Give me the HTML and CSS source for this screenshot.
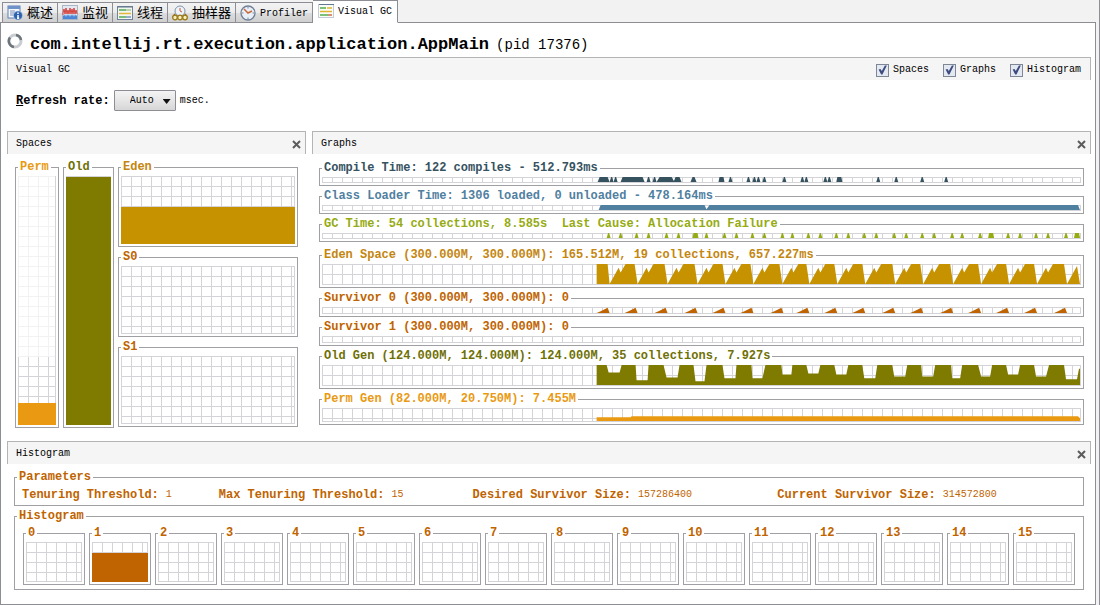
FILE: index.html
```html
<!DOCTYPE html>
<html lang="zh-CN">
<head>
<meta charset="utf-8">
<title>Visual GC</title>
<link rel="stylesheet" href="styles.css">
</head>
<body>
<div class="window">
  <nav class="tabs" role="tablist">
    <button class="tab" role="tab"><svg class="icon" viewBox="0 0 16 16"><rect x="1" y="1" width="12" height="12" fill="#f4f7fc" stroke="#5b7fb5"/><path d="M1 1h12v3H1z" fill="#6f93c8"/><path d="M3 6h5M3 8h4M3 10h4" stroke="#7d93b5"/><circle cx="11" cy="10.500" r="4.500" fill="#2d62ae" stroke="#c9d8ee" stroke-width=".6"/><path d="M11 7.500v1.500M11 10v3.500M10 13.200h2.200" stroke="#fff" stroke-width="1.500"/></svg>概述</button>
    <button class="tab" role="tab"><svg class="icon" viewBox="0 0 16 16"><rect x=".5" y=".5" width="15" height="14" fill="#e4e9f1" stroke="#a9b4c4"/><path d="M1 10V8l1-4 1 5 1-6 1 6 1-4 1 4 1-6 1 6 1-5 1 5 1-6 1 6 1-4 1 4" fill="none" stroke="#d6403c"/><path d="M1 14V10l1 1 1-2 1 3 1-3 1 2 1-2 1 3 1-3 1 2 1-2 1 3 1-3 1 2 1-1v4z" fill="#4a86d8"/></svg>监视</button>
    <button class="tab" role="tab"><svg class="icon" viewBox="0 0 16 16"><rect x=".5" y="1.500" width="15" height="13" fill="#f3f6f0" stroke="#71839b"/><path d="M.5 2h15" stroke="#5f7288"/><path d="M2 5h7" stroke="#51a854" stroke-width="1.500"/><path d="M9 5h5" stroke="#a9c89a" stroke-width="1.500"/><path d="M2 8.500h12" stroke="#e3b63c" stroke-width="1.500"/><path d="M2 12h7" stroke="#51a854" stroke-width="1.500"/><path d="M9 12h5" stroke="#7895c5" stroke-width="1.500"/></svg>线程</button>
    <button class="tab" role="tab"><svg class="icon" viewBox="0 0 16 16"><circle cx="8" cy="6" r="5" fill="#eef3fa" stroke="#7f91a8"/><path d="M8 3v3l2 1" fill="none" stroke="#c65b34"/><path d="M1 12l2-3M15 12l-2-3" stroke="#8b6b13" stroke-width="1.500"/><g fill="#f7eebd" stroke="#9b7918" stroke-width="1.300"><circle cx="3" cy="12.500" r="2.300"/><circle cx="8" cy="12.500" r="2.300"/><circle cx="13" cy="12.500" r="2.300"/></g></svg>抽样器</button>
    <button class="tab" role="tab"><svg class="icon" viewBox="0 0 16 16"><circle cx="8" cy="8" r="7" fill="#e8eff8" stroke="#6f7f95" stroke-width="1.300"/><path d="M8 2v1.500M8 12.500V14M2 8h1.500M12.500 8H14" stroke="#7b8797"/><path d="M4 4l4 4 4-2" fill="none" stroke="#c96a3a" stroke-width="1.500"/></svg>Profiler</button>
    <button class="tab tab-active" role="tab" aria-selected="true"><svg class="icon" viewBox="0 0 16 16"><rect x=".5" y="1.500" width="15" height="13" fill="#fbfcf5" stroke="#c3ccd4"/><path d="M1 1.500h15" stroke="#60788f"/><path d="M2 5h6M2 12h8" stroke="#52ad4e" stroke-width="1.500"/><path d="M9 5h5M2 8.500h12" stroke="#e1b532" stroke-width="1.500"/><path d="M10 12h4" stroke="#cf6a4c" stroke-width="1.500"/></svg>Visual GC</button>
  </nav>

  <main class="page">
    <header class="title-row">
      <svg class="ring" viewBox="0 0 16 16"><circle cx="8" cy="8" r="6" fill="none" stroke="#c9cdd1" stroke-width="3"/><path d="M3 4.500A6 6 0 0 0 7 14M9 2a6 6 0 0 1 5 5" fill="none" stroke="#6d747b" stroke-width="2.500"/></svg>
      <h1 class="title">com.intellij.rt.execution.application.AppMain</h1>
      <span class="pid">(pid 17376)</span>
    </header>

    <div class="bar">
      <span>Visual GC</span>
      <div class="checks">
        <label class="check"><input class="box" type="checkbox" checked>Spaces</label>
        <label class="check"><input class="box" type="checkbox" checked>Graphs</label>
        <label class="check"><input class="box" type="checkbox" checked>Histogram</label>
      </div>
    </div>

    <div class="rate">
      <label class="rate-label" for="rate"><u>R</u>efresh rate:</label>
      <span class="select-wrap"><select class="select" id="rate"><option>Auto</option></select></span>
      <span>msec.</span>
    </div>

    <div class="columns">
      <section>
        <div class="bar"><span>Spaces</span><button class="close" aria-label="Close Spaces"><svg class="cross" viewBox="0 0 9 9"><path d="M1 1l7 7M8 1L1 8"/></svg></button></div>
        <div class="spaces">
          <fieldset class="group tall perm"><legend>Perm</legend><div class="grid"><div class="reserved"></div><div class="fill" style="height:9%"></div></div></fieldset>
          <fieldset class="group tall old"><legend>Old</legend><div class="grid"><div class="fill" style="height:100%"></div></div></fieldset>
          <div class="young">
            <fieldset class="group eden"><legend>Eden</legend><div class="grid space"><div class="fill" style="height:55%"></div></div></fieldset>
            <fieldset class="group surv"><legend>S0</legend><div class="grid space"></div></fieldset>
            <fieldset class="group surv"><legend>S1</legend><div class="grid space"></div></fieldset>
          </div>
        </div>
      </section>

      <section>
        <div class="bar"><span>Graphs</span><button class="close" aria-label="Close Graphs"><svg class="cross" viewBox="0 0 9 9"><path d="M1 1l7 7M8 1L1 8"/></svg></button></div>
        <div class="graphs">
          <fieldset class="group compile"><legend>Compile Time: 122 compiles - 512.793ms</legend><svg class="grid chart thin" data-chart="compile" viewBox="0 0 759 6" preserveAspectRatio="none"></svg></fieldset>
          <fieldset class="group loader"><legend>Class Loader Time: 1306 loaded, 0 unloaded - 478.164ms</legend><svg class="grid chart thin" data-chart="loader" viewBox="0 0 759 6" preserveAspectRatio="none"></svg></fieldset>
          <fieldset class="group gc"><legend>GC Time: 54 collections, 8.585s&nbsp; Last Cause: Allocation Failure</legend><svg class="grid chart thin" data-chart="gc" viewBox="0 0 759 6" preserveAspectRatio="none"></svg></fieldset>
          <fieldset class="group eden eden-graph"><legend>Eden Space (300.000M, 300.000M): 165.512M, 19 collections, 657.227ms</legend><svg class="grid chart high" data-chart="eden" viewBox="0 0 759 21" preserveAspectRatio="none"></svg></fieldset>
          <fieldset class="group surv"><legend>Survivor 0 (300.000M, 300.000M): 0</legend><svg class="grid chart low" data-chart="s0" viewBox="0 0 759 7" preserveAspectRatio="none"></svg></fieldset>
          <fieldset class="group surv"><legend>Survivor 1 (300.000M, 300.000M): 0</legend><svg class="grid chart low" viewBox="0 0 759 7" preserveAspectRatio="none"></svg></fieldset>
          <fieldset class="group old"><legend>Old Gen (124.000M, 124.000M): 124.000M, 35 collections, 7.927s</legend><svg class="grid chart high" data-chart="old" viewBox="0 0 759 21" preserveAspectRatio="none"></svg></fieldset>
          <fieldset class="group perm"><legend>Perm Gen (82.000M, 20.750M): 7.455M</legend><svg class="grid chart mid" data-chart="perm" viewBox="0 0 759 14" preserveAspectRatio="none"></svg></fieldset>
        </div>
      </section>
    </div>

    <section>
      <div class="bar"><span>Histogram</span><button class="close" aria-label="Close Histogram"><svg class="cross" viewBox="0 0 9 9"><path d="M1 1l7 7M8 1L1 8"/></svg></button></div>
      <div class="histogram">
        <fieldset class="group surv params-group"><legend>Parameters</legend>
          <dl class="params">
            <div class="param"><dt>Tenuring Threshold:</dt><dd>1</dd></div>
            <div class="param"><dt>Max Tenuring Threshold:</dt><dd>15</dd></div>
            <div class="param"><dt>Desired Survivor Size:</dt><dd>157286400</dd></div>
            <div class="param"><dt>Current Survivor Size:</dt><dd>314572800</dd></div>
          </dl>
        </fieldset>
        <fieldset class="group surv ages-group"><legend>Histogram</legend>
          <div class="ages">
            <fieldset class="group"><legend>0</legend><div class="grid age"></div></fieldset>
            <fieldset class="group"><legend>1</legend><div class="grid age"><div class="fill" style="height:74%"></div></div></fieldset>
            <fieldset class="group"><legend>2</legend><div class="grid age"></div></fieldset>
            <fieldset class="group"><legend>3</legend><div class="grid age"></div></fieldset>
            <fieldset class="group"><legend>4</legend><div class="grid age"></div></fieldset>
            <fieldset class="group"><legend>5</legend><div class="grid age"></div></fieldset>
            <fieldset class="group"><legend>6</legend><div class="grid age"></div></fieldset>
            <fieldset class="group"><legend>7</legend><div class="grid age"></div></fieldset>
            <fieldset class="group"><legend>8</legend><div class="grid age"></div></fieldset>
            <fieldset class="group"><legend>9</legend><div class="grid age"></div></fieldset>
            <fieldset class="group"><legend>10</legend><div class="grid age"></div></fieldset>
            <fieldset class="group"><legend>11</legend><div class="grid age"></div></fieldset>
            <fieldset class="group"><legend>12</legend><div class="grid age"></div></fieldset>
            <fieldset class="group"><legend>13</legend><div class="grid age"></div></fieldset>
            <fieldset class="group"><legend>14</legend><div class="grid age"></div></fieldset>
            <fieldset class="group"><legend>15</legend><div class="grid age"></div></fieldset>
          </div>
        </fieldset>
      </div>
    </section>
  </main>
</div>
<script src="charts.js"></script>
</body>
</html>
```

FILE: styles.css
```css
* { box-sizing: border-box; }

body {
  margin: 0;
  background: #fff;
  color: #000;
  font: 10px/14px "Liberation Mono", "Noto Sans CJK SC", monospace;
}

button, select, input { font: inherit; color: inherit; margin: 0; }

.window {
  display: flex;
  flex-direction: column;
  min-height: 100vh;
  padding-right: 3px;
  border-right: 1px solid #8c8e94;
  background: #f2f2f3;
}

/* Tabs */
.tabs {
  position: relative;
  z-index: 1;
  display: flex;
  align-items: flex-end;
  height: 23px;
  padding-left: 2px;
}

.tab {
  display: flex;
  align-items: center;
  gap: 4px;
  height: 21px;
  padding: 3px 4px 0;
  border: 1px solid #8c8e94;
  border-left-width: 0;
  background: linear-gradient(#f3f3f3 0%, #ebebeb 50%, #dddddd 51%, #cfcfcf 100%);
  white-space: nowrap;
}

.tab:first-child { border-left-width: 1px; }
.tab:not(.tab-active) { font-size: 13px; }
.tab:nth-child(5) { font-size: 10px; }

.tab-active {
  height: 23px;
  padding: 1px 5px 0;
  border-bottom-color: #fff;
  background: #fff;
}

.icon { width: 16px; height: 16px; flex: none; margin-top: -3px; }

/* Page frame */
.page {
  flex: 1;
  margin-top: -1px;
  padding: 1px 4px 0 6px;
  border: 1px solid #8c8e94;
  background: #fff;
}

.title-row { display: flex; gap: 7px; height: 33px; padding: 9px 0 0; }
.ring { width: 16px; height: 16px; flex: none; }
.title { margin: 0; font-size: 17px; line-height: 24px; }
.pid { font-size: 14px; line-height: 24px; }

.bar {
  display: flex;
  align-items: center;
  justify-content: space-between;
  height: 23px;
  padding: 2px 9px 0 8px;
  border: 1px solid #b4b4b4;
  border-bottom: 0;
  background: #f5f5f5;
}

.bar > .close { margin-right: -5px; }

.close { padding: 0; border: 0; background: none; line-height: 0; }
.cross { width: 9px; height: 9px; fill: none; stroke: #5c5c5c; stroke-width: 2; }

.checks { display: flex; gap: 14px; }
.check { display: flex; align-items: center; gap: 4px; }

.box {
  appearance: none;
  width: 13px;
  height: 13px;
  border: 1px solid #7d8796;
  background: #e4e8f0;
}

.box:checked::after {
  content: "";
  display: block;
  width: 11px;
  height: 11px;
  background: #3d4c80;
  clip-path: polygon(15% 45%, 32% 40%, 44% 60%, 72% 8%, 90% 8%, 50% 92%, 38% 92%);
}

.rate { display: flex; align-items: center; gap: 4px; padding: 10px 9px 20px; }
.rate-label { font-size: 12px; font-weight: bold; }

.select-wrap { position: relative; }
.select-wrap::after {
  content: "";
  position: absolute;
  top: 9px;
  right: 5px;
  width: 8px;
  height: 5px;
  background: #111;
  clip-path: polygon(0 0, 100% 0, 50% 100%);
  pointer-events: none;
}

.select {
  display: block;
  appearance: none;
  width: 62px;
  height: 21px;
  padding: 0 15px;
  border: 1px solid #8c8e94;
  border-radius: 1px;
  background: linear-gradient(#f4f4f4, #e6e6e6 50%, #d6d6d6);
}

/* Titled groups */
.columns {
  display: grid;
  grid-template-columns: minmax(0, 299fr) minmax(0, 779fr);
  gap: 6px;
  padding-bottom: 13px;
}

.group {
  min-width: 0;
  margin: 0;
  padding: 2px;
  border: 1px solid #a0a0a4;
}

.group > legend { padding: 0 2px; font-size: 12px; font-weight: bold; white-space: nowrap; }

.grid {
  display: flex;
  flex-direction: column;
  justify-content: flex-end;
  border: 1px solid #d4d4d8;
  border-width: 0 1px 1px 0;
  background:
    linear-gradient(90deg, #d4d4d8 1px, transparent 1px) 0 0 / 10px 10px,
    linear-gradient(#d4d4d8 1px, transparent 1px) 0 0 / 10px 10px;
}

.fill { margin: 0 -1px -1px 0; background: currentColor; }

.perm { color: #e99a12; }
.old { color: #7f7b00; }
.eden { color: #c69200; }
.surv { color: #bf6400; }
.compile { color: #36525f; }
.loader { color: #50809f; }
.gc { color: #96ab12; }
.old > legend { color: #6f7005; }
.eden > legend { color: #c4860f; }

.spaces {
  display: grid;
  grid-template-columns: minmax(0, 44fr) minmax(0, 51fr) minmax(0, 180fr);
  gap: 4px;
  padding: 6px 8px 0;
}

.tall > .grid { height: 249px; }
.reserved { height: 73%; margin-bottom: auto; background: rgba(255, 255, 255, .7); }
.young { display: flex; flex-direction: column; gap: 3px; }
.space { height: 68px; }

.graphs { display: flex; flex-direction: column; gap: 3px; padding: 7px 7px 0; }
.eden-graph { margin-top: 3px; }
.chart { display: block; width: 100%; fill: currentColor; }
.thin { height: 6px; }
.low { height: 7px; }
.mid { height: 14px; }
.high { height: 21px; }

/* Histogram */
.histogram { display: flex; flex-direction: column; gap: 3px; padding: 6px 7px 14px; }
.params-group { padding: 4px 7px 3px; }
.params-group > legend { margin-left: -5px; }
.ages-group > legend { margin-left: -6px; }
.params {
  display: grid;
  grid-template-columns: 197fr 254fr 305fr 299fr;
  margin: 0;
}
.param { display: flex; gap: 7px; white-space: nowrap; }
.param dt { font-size: 12px; font-weight: bold; }
.param dd { margin: 0; }
.ages-group { padding: 3px 8px 4px; }
.ages { display: grid; grid-template-columns: repeat(16, minmax(0, 1fr)); gap: 4px; }
.age { height: 40px; }
```

FILE: charts.js
```js
// A pulse is [centre, half width of the base, half width of the top].
function pulses(list, base, top) {
  return list.map(function (p) {
    var c = p[0], b = p[1], t = p[2];
    return [[c - b, base], [c - t, top], [c + t, top], [c + b, base]];
  });
}

function small(xs) {
  return xs.map(function (x) { return [x, 2, 0.5]; });
}

function eden() {
  var lows = [288, 316, 346, 376, 404, 432, 461, 488, 516, 544, 574, 602, 632, 660, 688, 716, 746];
  var pts = [[275, 21], [275, 0], [286, 0]];
  lows.forEach(function (l, i) {
    pts.push([l, 21]);
    if (i < lows.length - 1) {
      pts.push([l + 9, 4], [l + 11, 9], [l + 16, 0], [lows[i + 1] - 3, 0]);
    }
  });
  pts.push([756, 2], [759, 21]);
  return [pts];
}

function old() {
  // Each dip: end of plateau, start and end of the low level, its depth, start of next plateau.
  var dips = [
    [285, 287, 298, 8, 300], [314, 315, 326, 16, 327], [342, 345, 356, 13, 358],
    [372, 374, 383, 17, 385], [401, 403, 414, 14, 415], [430, 431, 441, 14, 444],
    [460, 461, 470, 10, 471], [485, 487, 497, 9, 499], [513, 515, 525, 10, 527],
    [541, 543, 554, 14, 556], [571, 573, 584, 12, 586], [600, 601, 612, 12, 614],
    [630, 631, 639, 14, 641], [657, 660, 669, 12, 671], [685, 687, 697, 10, 699],
    [713, 715, 725, 12, 728], [743, 745, 756, 15, 758]
  ];
  var pts = [[275, 21], [275, 0]];
  dips.forEach(function (d) {
    var end = d[4] === 758 ? 4 : 0;
    pts.push([d[0], 0], [d[1], d[3]], [d[2], d[3]], [d[4], end]);
  });
  pts.push([759, 4], [759, 21]);
  return [pts];
}

var charts = {
  compile: pulses([[282, 6, 4], [311, 12, 10], [344, 9, 6], [356, 4, 2], [372, 3, 1], [400, 3, 2], [518, 3, 2]]
    .concat(small([290, 294, 327, 333, 409, 427, 433, 437, 443, 463, 481, 485, 504, 508, 557, 575, 601, 625])), 6, 0),
  loader: [[[277, 6], [279, 0], [383, 0], [385, 5], [388, 0], [757, 0], [759, 6]]],
  gc: pulses([[374, 3, 2], [670, 3, 2], [756, 3, 2]]
    .concat(small([287, 299, 315, 327, 345, 357, 385, 403, 415, 431, 443, 461, 471, 487, 499, 515,
      527, 543, 555, 573, 585, 601, 613, 631, 641, 659, 687, 699, 715, 727, 745])), 6, 0),
  eden: eden(),
  s0: [286, 314, 344, 374, 402, 430, 460, 486, 514, 542, 572, 600, 630, 658, 686, 714, 744]
    .map(function (p) { return [[p - 11, 7], [p - 7, 5], [p - 2, 2], [p, 1], [p + 2, 7]]; }),
  old: old(),
  perm: [[[275, 14], [275, 10], [309, 10], [310, 9], [757, 9], [759, 11], [759, 14]]]
};

document.querySelectorAll("[data-chart]").forEach(function (svg) {
  charts[svg.dataset.chart].forEach(function (pts) {
    var shape = document.createElementNS("http://www.w3.org/2000/svg", "polygon");
    shape.setAttribute("points", pts.join(" "));
    svg.appendChild(shape);
  });
});
```
